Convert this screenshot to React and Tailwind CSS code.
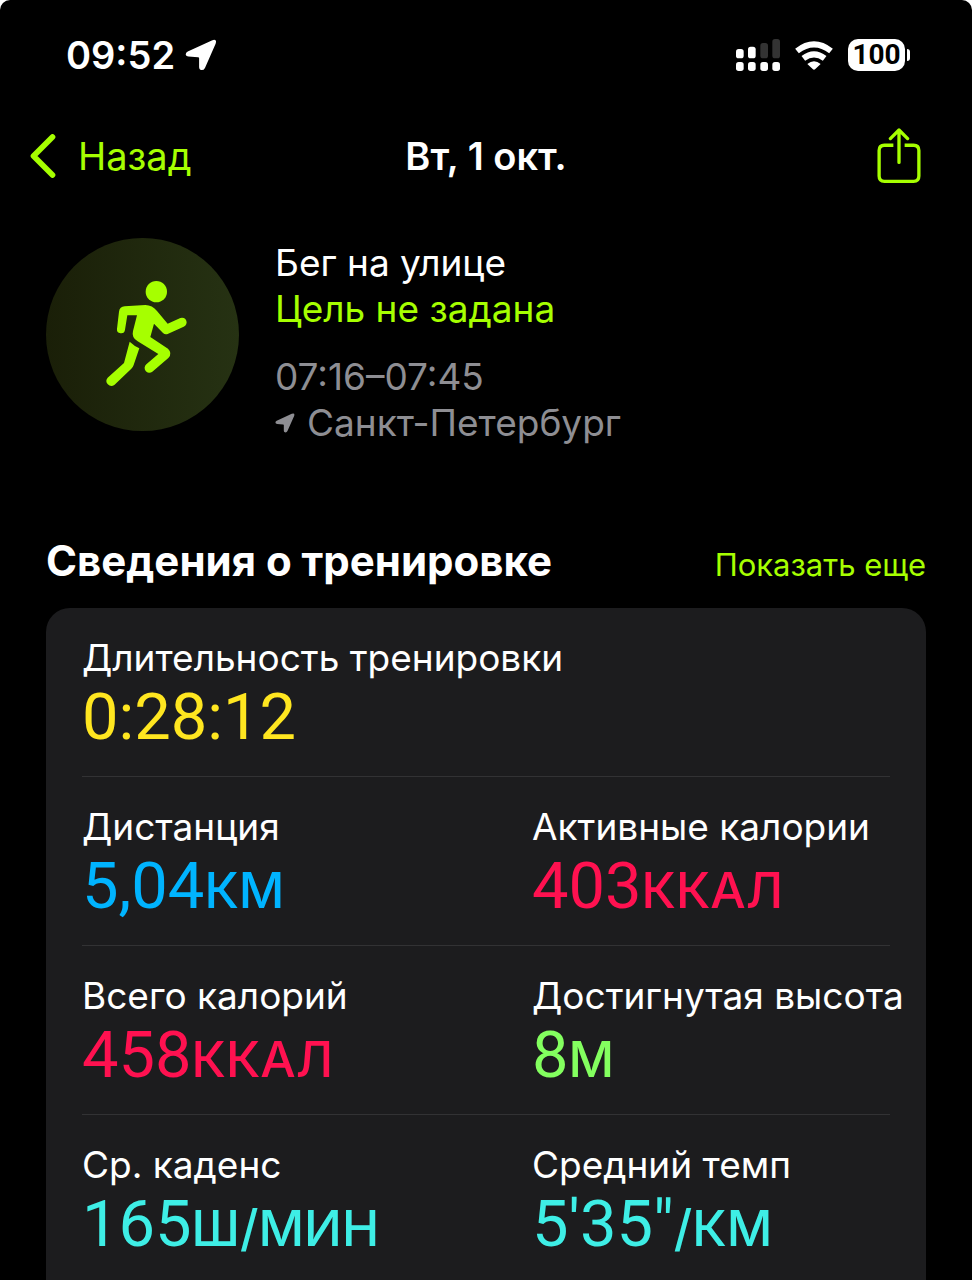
import React from "react";

const workout = {
  date: "Вт, 1 окт.",
  type: "Бег на улице",
  goal: "Цель не задана",
  time: "07:16–07:45",
  place: "Санкт-Петербург",
};

// Each row holds one or two metrics
const metricRows = [
  [{ label: "Длительность тренировки", value: "0:28:12", color: "text-[#ffe620]" }],
  [
    { label: "Дистанция", value: "5,04", unit: "КМ", color: "text-[#00b4ff]" },
    { label: "Активные калории", value: "403", unit: "ККАЛ", color: "text-[#ff1150]" },
  ],
  [
    { label: "Всего калорий", value: "458", unit: "ККАЛ", color: "text-[#ff1150]" },
    { label: "Достигнутая высота", value: "8", unit: "М", color: "text-[#83ff5f]" },
  ],
  [
    { label: "Ср. каденс", value: "165", unit: "Ш/МИН", color: "text-[#3eeee6]" },
    { label: "Средний темп", value: "5'35\"", unit: "/КМ", color: "text-[#3eeee6]" },
  ],
];

const LocationIcon = ({ className }) => (
  <svg viewBox="553 120 93 93" fill="currentColor" className={className} aria-hidden="true">
    <path d="M631 124Q647 118 642 134L611 204Q607 212 599 210Q594 208 594 202V176Q594 173 591 173L563 171Q556 170 555 165Q555 159 561 156Z" />
  </svg>
);

const SignalIcon = () => (
  <svg viewBox="110 117 132 96" className="w-11 h-8" fill="#fff" aria-hidden="true">
    {[110, 146, 183, 219].map((x) => (
      <rect key={x} x={x} y="186" width="23" height="27" rx="8" />
    ))}
    <rect x="110" y="147" width="23" height="28" rx="8" />
    <rect x="146" y="140" width="23" height="35" rx="8" />
    <rect x="183" y="129" width="23" height="46" rx="8" fill="#333" />
    <rect x="219" y="117" width="23" height="58" rx="8" fill="#333" />
  </svg>
);

const WifiIcon = () => (
  <svg viewBox="286 121 114 87" className="w-[38px] h-[29px]" fill="none" stroke="#fff" aria-hidden="true">
    <path d="M292 151Q343 111 394 151" strokeWidth="18" />
    <path d="M311 173Q343 149 375 173" strokeWidth="18" />
    <path d="M323 190Q343 173 363 190L347 205Q343 209 339 205Z" fill="#fff" stroke="none" />
  </svg>
);

const BatteryIcon = () => (
  <div className="flex items-center gap-0.5">
    <span className="flex h-8 w-[57px] items-center justify-center rounded-[10px] bg-white font-['Roboto',sans-serif] text-[28px] font-bold leading-8 text-black">
      100
    </span>
    <span className="h-3 w-[3px] rounded-r-full bg-white" />
  </div>
);

const ShareIcon = () => (
  <svg viewBox="530 384 132 166" className="w-11 h-[55px]" fill="none" stroke="currentColor" strokeWidth="10" aria-hidden="true">
    <path d="M579 436H552Q536 436 536 452V529Q536 545 552 545H640Q656 545 656 529V452Q656 436 640 436H613" />
    <path d="M596 488V392M570 416L596 390L622 416" strokeLinecap="round" strokeLinejoin="round" />
  </svg>
);

const RunnerIcon = () => (
  <svg viewBox="47 56 579 579" className="size-full" fill="currentColor" aria-hidden="true">
    <circle cx="378" cy="217" r="32" />
    <path d="M283 261Q268 262 266 277L260 328a12 12 0 0 0 24 3L291 288L320 288L308 335Q303 355 322 366L384 404L348 435a14 14 0 0 0 18 22L414 416Q427 402 413 388L360 353L371 313L398 341Q404 347 412 344L460 322a13 13 0 0 0-10-26L412 313L380 275Q366 257 345 257Z" />
    <path d="M298 367Q312 380 327 387L310 437Q308 443 303 448L252 497a15 15 0 0 1-20-22L281 431Z" />
  </svg>
);

const Metric = ({ label, value, unit, color }) => (
  <div className="whitespace-nowrap">
    <dt className="text-[37px] leading-[46px] text-white">{label}</dt>
    <dd className={`font-['Roboto',sans-serif] text-[65px] leading-[72px] ${color}`}>
      {value}
      {unit && <span className="font-['Inter',sans-serif] text-[50px] font-medium leading-none">{unit}</span>}
    </dd>
  </div>
);

const App = () => {
  return (
    <div className="min-h-screen bg-white font-['Inter',sans-serif]">
      <div className="flex min-h-screen flex-col rounded-t-[10px] bg-black text-[37px] leading-[46px] text-white">
        {/* Status bar */}
        <div className="flex items-center justify-between pt-8 pl-[66px] pr-[62px]">
          <div className="flex items-center gap-2.5 text-[38px] font-semibold">
            <span>09:52</span>
            <LocationIcon className="w-8 h-8" />
          </div>
          <div className="flex items-center gap-[15px]">
            <SignalIcon />
            <WifiIcon />
            <BatteryIcon />
          </div>
        </div>

        {/* Navigation */}
        <header className="mt-[50px] grid grid-cols-[1fr_auto_1fr] items-center px-[30px] text-[38px]">
          <button type="button" className="flex items-center gap-[22px] text-[#a6ff00]">
            <svg viewBox="90 404 77 132" className="w-[26px] h-11" fill="none" stroke="currentColor" strokeWidth="17" strokeLinecap="round" strokeLinejoin="round" aria-hidden="true">
              <path d="M157 413L100 470L157 527" />
            </svg>
            Назад
          </button>
          <h1 className="font-semibold">{workout.date}</h1>
          <button type="button" aria-label="Поделиться" className="mr-[21px] justify-self-end text-[#a6ff00]">
            <ShareIcon />
          </button>
        </header>

        {/* Workout summary */}
        <section className="mt-[55px] flex gap-9 px-[46px]">
          <div className="size-[193px] shrink-0 rounded-full bg-linear-to-r from-[#1a1f08] to-[#263213] text-[#a6ff00]">
            <RunnerIcon />
          </div>
          <div className="pt-0.5">
            <p>{workout.type}</p>
            <p className="text-[#a6ff00]">{workout.goal}</p>
            <p className="mt-[22px] text-[#8e8e93]">{workout.time}</p>
            <p className="flex items-center gap-3 text-[#8e8e93]">
              <LocationIcon className="w-5 h-5" />
              {workout.place}
            </p>
          </div>
        </section>

        {/* Workout details */}
        <section className="mt-[91px] flex grow flex-col px-[46px]">
          <div className="flex items-baseline justify-between">
            <h2 className="text-[42px] font-bold leading-[48px]">Сведения о тренировке</h2>
            <a href="#details" className="text-[31px] leading-[40px] text-[#a6ff00]">
              Показать еще
            </a>
          </div>
          <div className="mt-[23px] grow rounded-t-[24px] bg-[#1c1c1e] px-9">
            {metricRows.map((row, idx) => (
              <dl
                key={idx}
                className="grid grid-cols-2 gap-x-[92px] border-b border-[#323234] pt-[27px] pb-[23px] last:border-b-0 last:pb-0"
              >
                {row.map((metric) => (
                  <Metric key={metric.label} {...metric} />
                ))}
              </dl>
            ))}
          </div>
        </section>
      </div>
    </div>
  );
};

export default App;
